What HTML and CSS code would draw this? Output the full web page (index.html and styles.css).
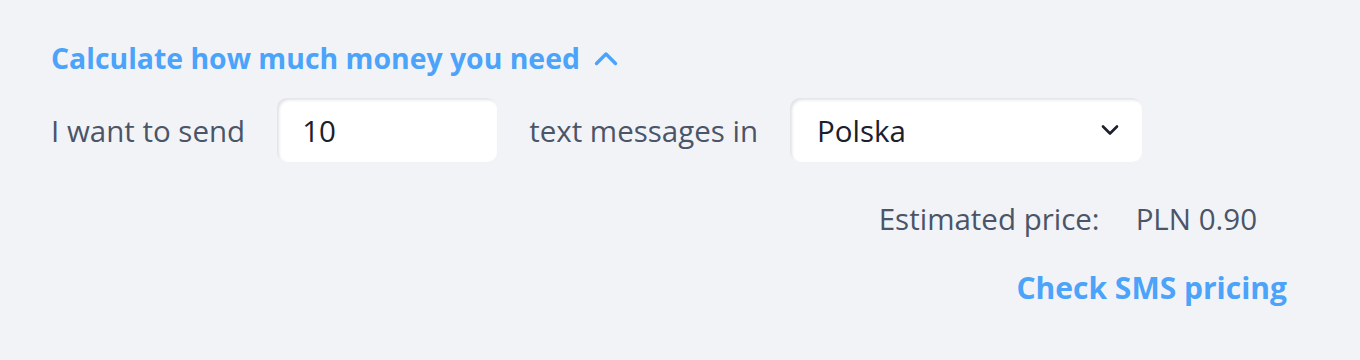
FILE: index.html
```html
<!DOCTYPE html>
<html>
<head>
<meta charset="utf-8">
<link rel="stylesheet" href="styles.css">
</head>
<body>
<div class="calc">
  <button class="toggle">Calculate how much money you need
    <svg class="chev" width="24" height="16" viewBox="0 0 24 16"><path d="M2.5 13.5 L12 4 L21.5 13.5" fill="none" stroke="currentColor" stroke-width="3.4" stroke-linecap="round" stroke-linejoin="round"/></svg>
  </button>
  <div class="row">
    <span class="label">I want to send</span>
    <div class="field num">10</div>
    <span class="label">text messages in</span>
    <div class="field select">Polska
      <svg class="caret" width="18" height="12" viewBox="0 0 18 12"><path d="M2 2.5 L9 9.5 L16 2.5" fill="none" stroke="#1a202c" stroke-width="2.6" stroke-linecap="round" stroke-linejoin="round"/></svg>
    </div>
  </div>
  <div class="price"><span>Estimated price:</span><span>PLN 0.90</span></div>
  <div class="linkrow"><a class="link">Check SMS pricing</a></div>
</div>
</body>
</html>
```

FILE: styles.css
```css
html, body { margin: 0; padding: 0; }
body {
  background: #f2f3f7;
  width: 1360px;
  height: 360px;
  font-family: "Open Sans", "Noto Sans", sans-serif;
  color: #4a5568;
}
.calc {
  padding: 37px 73px 0 51px;
}
.toggle {
  display: flex;
  align-items: center;
  gap: 14px;
  background: none;
  border: 0;
  padding: 0;
  font: inherit;
  font-weight: 700;
  font-size: 28.4px;
  color: #4ba3fa;
  height: 42px;
}
.chev { color: #4ba3fa; }
.row {
  display: flex;
  align-items: center;
  margin-top: 19px;
  font-size: 29.5px;
}
.label { color: #4a5568; }
.field {
  box-sizing: border-box;
  height: 64px;
  background: #fff;
  border-radius: 10px;
  box-shadow: inset 2px 2px 3px rgba(40,50,70,0.14);
  display: flex;
  align-items: center;
  color: #1a202c;
  font-size: 29.5px;
}
.num { width: 220px; margin: 0 32px 0 32px; padding-left: 25px; }
.select { width: 352px; margin-left: 32px; padding: 0 23px 0 27px; justify-content: space-between; }
.price {
  display: flex;
  justify-content: flex-end;
  gap: 36px;
  margin-top: 36px;
  padding-right: 30px;
  font-size: 29.5px;
  color: #4a5568;
}
.linkrow { display: flex; justify-content: flex-end; margin-top: 28px; }
.link { color: #4ba3fa; font-weight: 700; font-size: 30px; }
```
